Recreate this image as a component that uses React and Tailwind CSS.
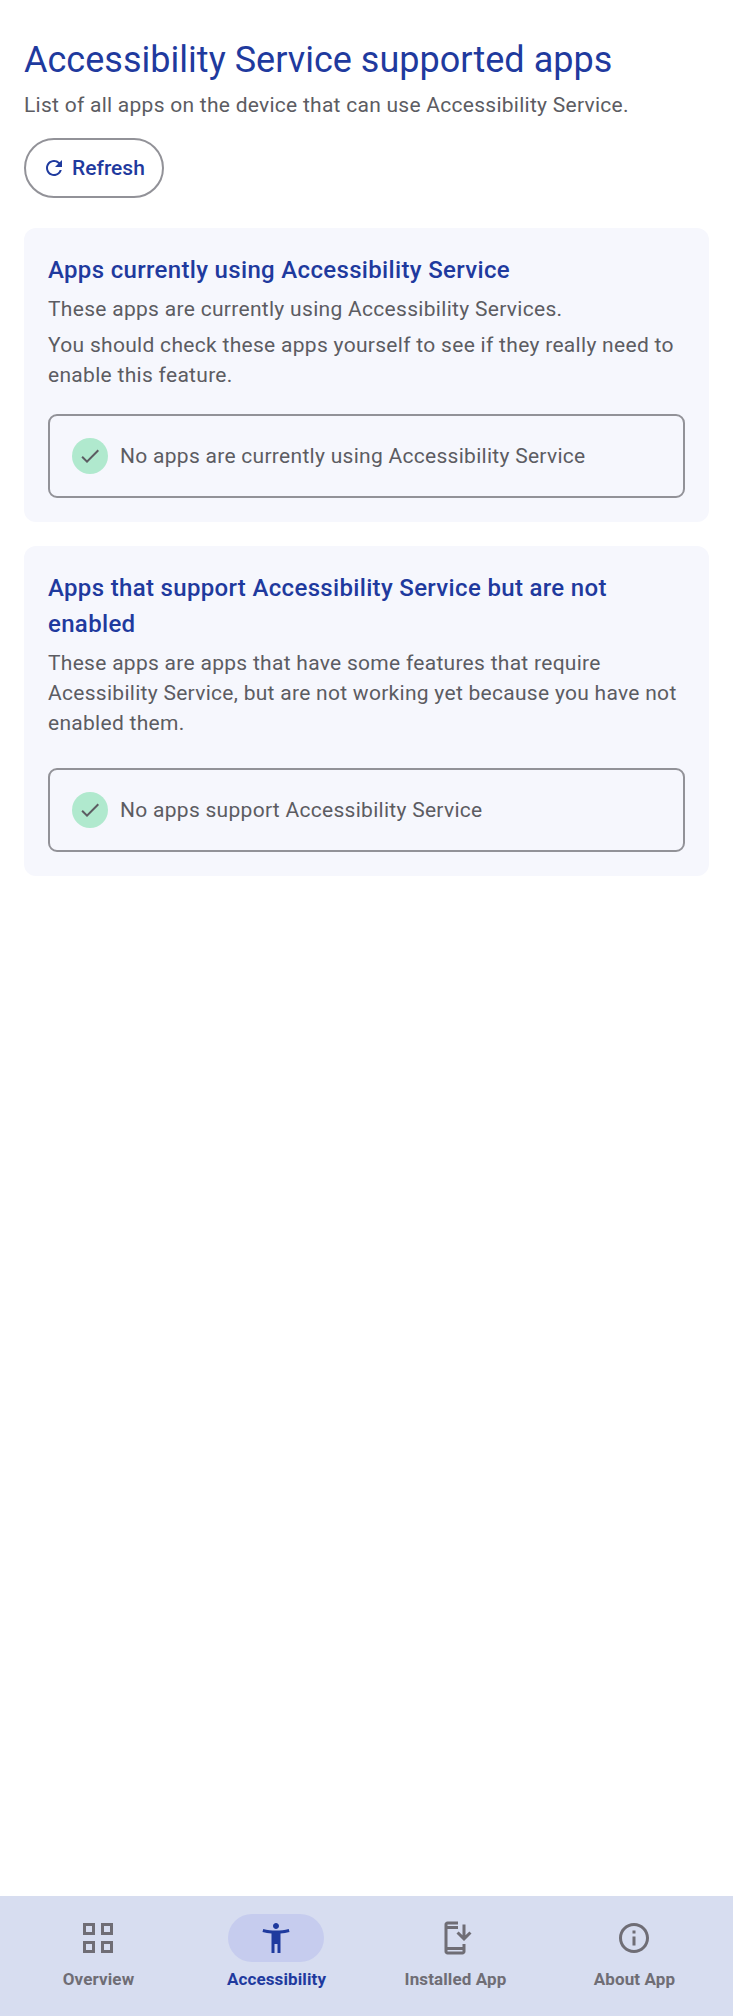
import React from "react";

const icons = {
  refresh:
    "M17.65 6.35A7.958 7.958 0 0 0 12 4c-4.42 0-7.99 3.58-7.99 8s3.57 8 7.99 8c3.73 0 6.84-2.55 7.73-6h-2.08A5.99 5.99 0 0 1 12 18c-3.31 0-6-2.69-6-6s2.69-6 6-6c1.66 0 3.14.69 4.22 1.78L13 11h7V4l-2.35 2.35z",
  check: "M9 16.17 4.83 12l-1.42 1.41L9 19 21 7l-1.41-1.41z",
  overview:
    "M2 2h8v8H2zm2 2v4h4V4zM14 2h8v8h-8zm2 2v4h4V4zM2 14h8v8H2zm2 2v4h4v-4zM14 14h8v8h-8zm2 2v4h4v-4z",
  person:
    "M20.5 6c-2.61.7-5.67 1-8.5 1s-5.89-.3-8.5-1L3 8c1.86.5 4 .83 6 1v13h2v-6h2v6h2V9c2-.17 4.14-.5 6-1l-.5-2zM12 6c1.1 0 2-.9 2-2s-.9-2-2-2-2 .9-2 2 .9 2 2 2z",
  install:
    "M17 18H7V6h7V1H7c-1.1 0-2 .9-2 2v18c0 1.1.9 2 2 2h10c1.1 0 2-.9 2-2v-5h-2v2zm0 3H7v-1h10v1zM7 3h7v1H7V3zM18 14l5-5-1.41-1.41L19 10.17V3h-2v7.17l-2.59-2.58L13 9z",
  info: "M11 7h2v2h-2zm0 4h2v6h-2zm1-9C6.48 2 2 6.48 2 12s4.48 10 10 10 10-4.48 10-10S17.52 2 12 2zm0 18c-4.41 0-8-3.59-8-8s3.59-8 8-8 8 3.59 8 8-3.59 8-8 8z",
};

function Icon({ name, className }) {
  return (
    <svg viewBox="0 0 24 24" fill="currentColor" className={className}>
      <path d={icons[name]} />
    </svg>
  );
}

function Notice({ children }) {
  return (
    <div className="flex h-[84px] items-center gap-3 rounded-[9px] border-2 border-[#929298] px-[22px]">
      <span className="flex size-9 items-center justify-center rounded-full bg-[#b0e9ce]">
        <Icon name="check" className="size-6" />
      </span>
      <span>{children}</span>
    </div>
  );
}

function Section({ title, children }) {
  return (
    <section className="flex flex-col gap-1.5 rounded-xl bg-[#f6f7fd] p-6">
      <h2 className="text-[24px] leading-9 font-medium tracking-[0.33px] text-[#1f3a9e]">{title}</h2>
      {children}
    </section>
  );
}

function NavItem({ icon, label, active }) {
  return (
    <a
      className={
        active
          ? "flex flex-col items-center gap-1.5 text-[#1f3a9e]"
          : "flex flex-col items-center gap-1.5 text-[#6f6d75]"
      }
    >
      <span
        className={
          active
            ? "flex h-12 w-24 items-center justify-center rounded-full bg-[#c6ccee]"
            : "flex h-12 w-24 items-center justify-center"
        }
      >
        <Icon name={icon} className="size-9" />
      </span>
      <span className="pl-px text-[17px] leading-[23px] font-bold tracking-[0.12px] whitespace-nowrap">{label}</span>
    </a>
  );
}

export default function App() {
  return (
    <div className="flex h-[2016px] w-[733px] flex-col bg-white font-['Roboto',sans-serif] text-[21px] leading-[30px] tracking-[0.285px] text-[#5c5c62]">
      <main className="flex flex-1 flex-col px-6 pt-9">
        <h1 className="text-[36px] leading-[48px] tracking-[0.02px] text-[#1f3a9e]">
          Accessibility Service supported apps
        </h1>
        <p className="mt-1.5 tracking-[0.265px]">List of all apps on the device that can use Accessibility Service.</p>
        <button className="mt-[18px] flex h-[60px] w-[140px] items-center gap-[6px] rounded-full border-2 border-[#929298] pl-4 font-medium tracking-normal text-[#1f3a9e]">
          <Icon name="refresh" className="size-6" />
          Refresh
        </button>
        <div className="mt-[30px] flex flex-col gap-6">
          <Section title="Apps currently using Accessibility Service">
            <p className="tracking-[0.3px]">These apps are currently using Accessibility Services.</p>
            <p className="mb-[18px] tracking-[0.3px]">
              You should check these apps yourself to see if they really need to enable this feature.
            </p>
            <Notice>No apps are currently using Accessibility Service</Notice>
          </Section>
          <Section title="Apps that support Accessibility Service but are not enabled">
            <p className="mb-6">
              These apps are apps that have some features that require Acessibility Service, but are not
              working yet because you have not enabled them.
            </p>
            <Notice>No apps support Accessibility Service</Notice>
          </Section>
        </div>
      </main>
      <nav className="grid h-[120px] grid-cols-[178px_178px_180px_178px] bg-[#d7ddf0] pt-[18px] pl-[9px]">
        <NavItem icon="overview" label="Overview" />
        <NavItem icon="person" label="Accessibility" active />
        <NavItem icon="install" label="Installed App" />
        <NavItem icon="info" label="About App" />
      </nav>
    </div>
  );
}
